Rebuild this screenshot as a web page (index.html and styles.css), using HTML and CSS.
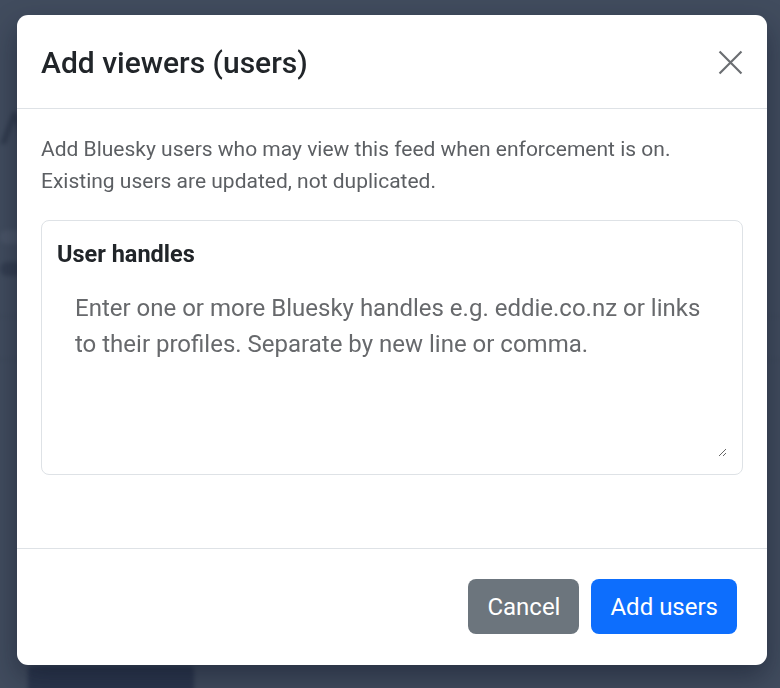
FILE: index.html
```html
<!DOCTYPE html>
<html lang="en">
<head>
<meta charset="utf-8">
<title>Feed viewers</title>
<link rel="stylesheet" href="styles.css">
</head>
<body>
<main class="page" aria-hidden="true">
  <div class="page-heading"></div>
  <div class="page-line light"></div>
  <div class="page-line dark"></div>
  <div class="page-box"></div>
  <div class="page-spacer"></div>
  <div class="page-btn"></div>
</main>

<div class="backdrop">
  <div class="modal" role="dialog" aria-labelledby="modal-title">
    <header class="modal-header">
      <h5 class="modal-title" id="modal-title">Add viewers (users)</h5>
      <button class="btn-close" type="button" aria-label="Close">
        <svg viewBox="0 0 16 16" width="27" height="27" aria-hidden="true">
          <path d="M1.5 1.5 14.5 14.5M14.5 1.5 1.5 14.5" stroke="currentColor" stroke-width="1.3" fill="none"/>
        </svg>
      </button>
    </header>
    <div class="modal-body">
      <p class="intro">Add Bluesky users who may view this feed when enforcement is on.<br>Existing users are updated, not duplicated.</p>
      <div class="field">
        <label class="field-label" for="handles">User handles</label>
        <textarea class="field-input" id="handles" placeholder="Enter one or more Bluesky handles e.g. eddie.co.nz or links to their profiles. Separate by new line or comma."></textarea>
      </div>
    </div>
    <footer class="modal-footer">
      <button class="btn btn-secondary" type="button">Cancel</button>
      <button class="btn btn-primary" type="button">Add users</button>
    </footer>
  </div>
</div>
</body>
</html>
```

FILE: styles.css
```css
* {
  box-sizing: border-box;
}

html, body {
  margin: 0;
  height: 100%;
}

body {
  font-family: Roboto, "Noto Sans", "Liberation Sans", sans-serif;
  background: #4a5566;
  overflow: hidden;
}

/* page content sitting behind the dialog */
.page {
  padding: 112px 0 0 0;
  display: flex;
  flex-direction: column;
  align-items: flex-start;
  filter: blur(2px);
}

.page-heading {
  width: 28px;
  height: 32px;
  background: #252f40;
  clip-path: polygon(0 100%, 45% 0, 60% 0, 100% 100%, 80% 100%, 52% 25%, 22% 100%);
}

.page-line {
  height: 14px;
  border-radius: 7px;
}

.page-line.light {
  margin-top: 86px;
  width: 24px;
  background: #5e687a;
}

.page-line.dark {
  margin-top: 18px;
  width: 24px;
  background: #2c3648;
}

.page-box {
  margin: 40px 0 0 -10px;
  width: 800px;
  height: 44px;
  border: 1px solid #3d4757;
  border-radius: 6px;
}

.page-spacer {
  height: 306px;
}

.page-btn {
  margin-left: 28px;
  width: 166px;
  height: 40px;
  border-radius: 4px;
  background: #1b2640;
}

/* dimmed overlay with the dialog on top */
.backdrop {
  position: fixed;
  inset: 0;
  background: rgba(58, 70, 88, 0.55);
  padding: 15px 13px 0 17px;
}

.modal {
  width: 750px;
  background: #fff;
  border-radius: 11px;
  box-shadow: 0 12px 28px rgba(10, 18, 35, 0.45);
  display: flex;
  flex-direction: column;
}

.modal-header {
  height: 94px;
  padding: 2px 22px 0 24px;
  display: flex;
  align-items: center;
  justify-content: space-between;
  border-bottom: 1px solid #dee2e6;
}

.modal-title {
  margin: 0;
  font-size: 30px;
  font-weight: 500;
  color: #212529;
}

.btn-close {
  border: 0;
  background: none;
  padding: 0;
  width: 30px;
  height: 30px;
  color: #6b6e72;
  display: flex;
  align-items: center;
  justify-content: center;
}

.modal-body {
  padding: 24px 24px 73px 24px;
}

.intro {
  margin: 0 0 23px 0;
  font-size: 21px;
  line-height: 32px;
  color: #5c5f63;
}

.field {
  border: 1px solid #dee2e6;
  border-radius: 8px;
  height: 255px;
  padding: 19px 15px 0 15px;
  display: flex;
  flex-direction: column;
}

.field-label {
  font-size: 23.5px;
  font-weight: 700;
  color: #212529;
  line-height: 28px;
}

.field-input {
  flex: 1;
  margin: 22px 0 17px 0;
  padding: 0 24px 0 18px;
  border: 0;
  outline: none;
  resize: vertical;
  font-family: inherit;
  font-size: 24px;
  line-height: 36px;
  color: #212529;
}

.field-input::placeholder {
  color: #67696c;
}

.modal-footer {
  border-top: 1px solid #dee2e6;
  padding: 30px 30px 31px 30px;
  display: flex;
  justify-content: flex-end;
  gap: 12px;
}

.btn {
  height: 55px;
  padding: 0 19px;
  border: 0;
  border-radius: 8px;
  font-family: inherit;
  font-size: 24px;
  color: #fff;
}

.btn-secondary {
  background: #6c757d;
}

.btn-primary {
  background: #0d6efd;
}
```
